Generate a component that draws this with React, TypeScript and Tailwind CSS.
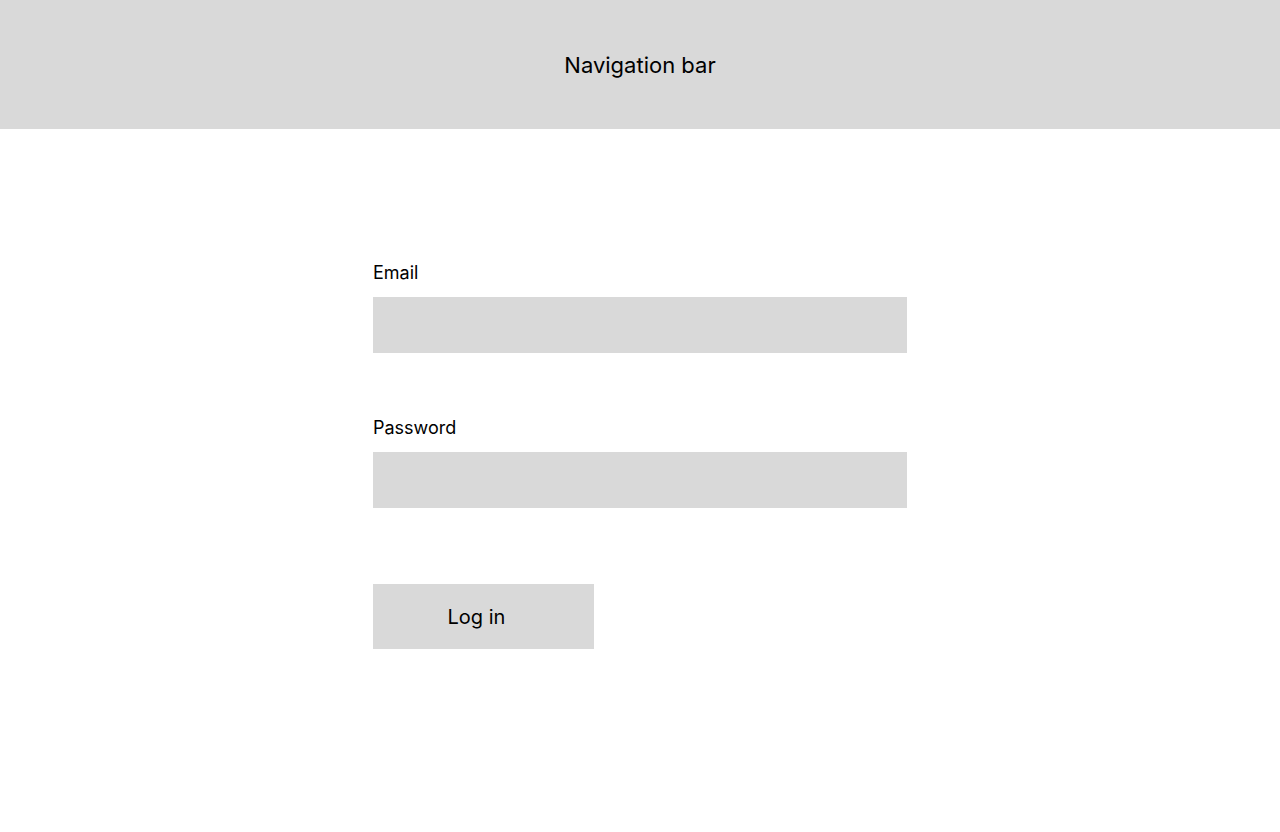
import React from 'react';

const Field = ({ label, type }: { label: string; type: string }) => (
  <div className="flex flex-col">
    <label className="text-[18px] leading-[22px] text-black mb-[13px]">{label}</label>
    <input type={type} className="w-[534px] h-[56px] bg-[#d9d9d9] outline-none px-3" />
  </div>
);

const App = () => {
  return (
    <div className="min-h-[832px] bg-white" style={{ fontFamily: 'Inter, "Noto Sans", sans-serif' }}>
      <nav className="h-[129px] bg-[#d9d9d9] flex items-center justify-center pt-[2px]">
        <span className="text-[22px] text-black">Navigation bar</span>
      </nav>

      <div className="flex justify-center pt-[133px]">
        <form className="w-[534px] flex flex-col gap-[64px]" onSubmit={(e) => e.preventDefault()}>
          <Field label="Email" type="email" />
          <Field label="Password" type="password" />
          <button
            type="submit"
            className="mt-[12px] w-[221px] h-[65px] bg-[#d9d9d9] text-[20px] text-black pr-[14px]"
          >
            Log in
          </button>
        </form>
      </div>
    </div>
  );
};

export default App;
